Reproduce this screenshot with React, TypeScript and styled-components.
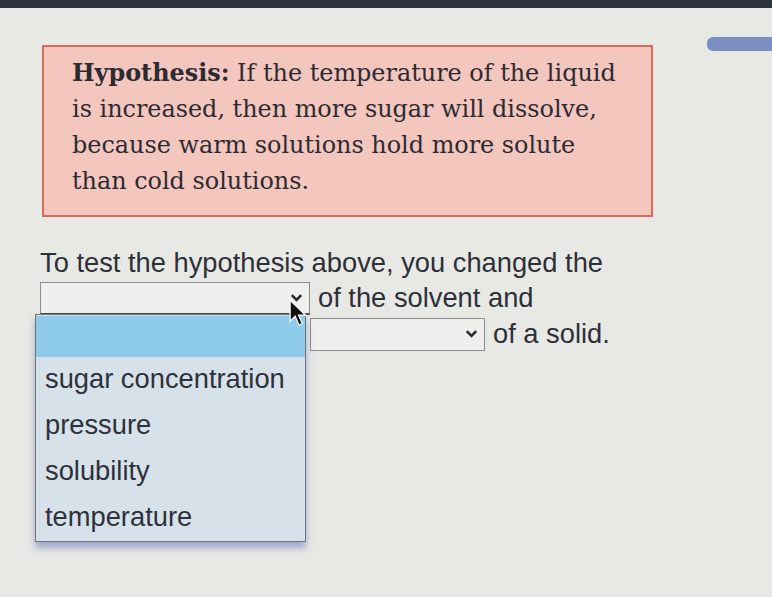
import React from 'react';
import styled, { createGlobalStyle } from 'styled-components';

const GlobalStyle = createGlobalStyle`
    html, body {
        margin: 0;
        padding: 0;
        background: #e8e9e5;
        overflow: hidden;
    }
`;

const Page = styled.div`
    width: 772px;
    height: 597px;
    position: relative;
    overflow: hidden;
    font-family: "Liberation Sans", Arial, sans-serif;
    color: #2e3038;
`;

const TopBar = styled.div`
    height: 8px;
    background: #2e323d;
`;

const Header = styled.div`
    display: flex;
    align-items: flex-start;
    padding: 37px 0 0 42px;
`;

const HypothesisBox = styled.div`
    flex-shrink: 0;
    width: 611px;
    height: 172px;
    box-sizing: border-box;
    border: 2px solid #d86c57;
    background: #f3c6be;
    padding: 8px 10px 0 28px;
    font-family: "DejaVu Serif", Georgia, serif;
    font-size: 23.9px;
    line-height: 36px;
    color: #2d2b31;
    white-space: nowrap;

    b {
        font-weight: bold;
    }
`;

const Pill = styled.div`
    margin: -8px 0 0 54px;
    width: 90px;
    height: 14px;
    flex-shrink: 0;
    border-radius: 6px 0 0 6px;
    background: #7b90c0;
`;

const Question = styled.div`
    position: relative;
    padding: 28px 0 0 40px;
    font-size: 27.3px;
`;

const Line = styled.div<{ indent?: number }>`
    display: flex;
    align-items: center;
    gap: 8px;
    height: 34px;
    margin-top: ${props => (props.indent ? 2 : 0)}px;
    padding-left: ${props => props.indent || 0}px;
`;

const TextLine = styled.div`
    height: 36px;
    line-height: 36px;
`;

const SelectBox = styled.div<{ width: number; open?: boolean }>`
    position: relative;
    flex-shrink: 0;
    width: ${props => props.width}px;
    height: 33px;
    box-sizing: border-box;
    border: 1px solid #8a8c8f;
    border-bottom: ${props => (props.open ? '2px solid #4a4d55' : '1px solid #8a8c8f')};
    background: #efefed;
`;

const Chevron = styled.svg`
    position: absolute;
    right: 6px;
    top: 10px;
    width: 13px;
    height: 10px;
`;

const Dropdown = styled.div`
    position: absolute;
    left: 35px;
    top: 97px;
    width: 271px;
    box-sizing: border-box;
    border: 1px solid #70737a;
    background: #d7e1ea;
    box-shadow: 0 6px 7px rgba(70, 90, 170, 0.45);
    z-index: 2;
`;

const Option = styled.div<{ active?: boolean }>`
    height: ${props => (props.active ? 41 : 46)}px;
    line-height: 44px;
    padding-left: 9px;
    margin-top: ${props => (props.active ? 1 : 0)}px;
    background: ${props => (props.active ? '#8fcbea' : 'transparent')};
    font-size: 27.3px;
    color: #2e3139;
`;

const Cursor = styled.svg`
    position: absolute;
    left: 289px;
    top: 82px;
    width: 20px;
    height: 29px;
    z-index: 3;
`;

const ChevronIcon = () => (
    <Chevron viewBox="0 0 13 10">
        <path d="M1.8 2.2 L6.5 7 L11.2 2.2" fill="none" stroke="#2a2c33" strokeWidth="2.6" />
    </Chevron>
);

const options = ['sugar concentration', 'pressure', 'solubility', 'temperature'];

export default function App() {
    return (
        <Page>
            <GlobalStyle />
            <TopBar />
            <Header>
                <HypothesisBox>
                    <b>Hypothesis:</b> If the temperature of the liquid
                    <br />
                    is increased, then more sugar will dissolve,
                    <br />
                    because warm solutions hold more solute
                    <br />
                    than cold solutions.
                </HypothesisBox>
                <Pill />
            </Header>
            <Question>
                <TextLine>To test the hypothesis above, you changed the</TextLine>
                <Line>
                    <SelectBox width={270} open>
                        <ChevronIcon />
                    </SelectBox>
                    <span>of the solvent and</span>
                </Line>
                <Line indent={270}>
                    <SelectBox width={175}>
                        <ChevronIcon />
                    </SelectBox>
                    <span>of a solid.</span>
                </Line>
                <Dropdown>
                    <Option active />
                    {options.map(o => (
                        <Option key={o}>{o}</Option>
                    ))}
                </Dropdown>
                <Cursor viewBox="0 0 18 26">
                    <path d="M1 1 L1 20 L5.5 15.5 L9 23.5 L12 22 L8.6 14.5 L15 14.5 Z" fill="#111" stroke="#f4f4f4" strokeWidth="1.2" />
                </Cursor>
            </Question>
        </Page>
    );
}
